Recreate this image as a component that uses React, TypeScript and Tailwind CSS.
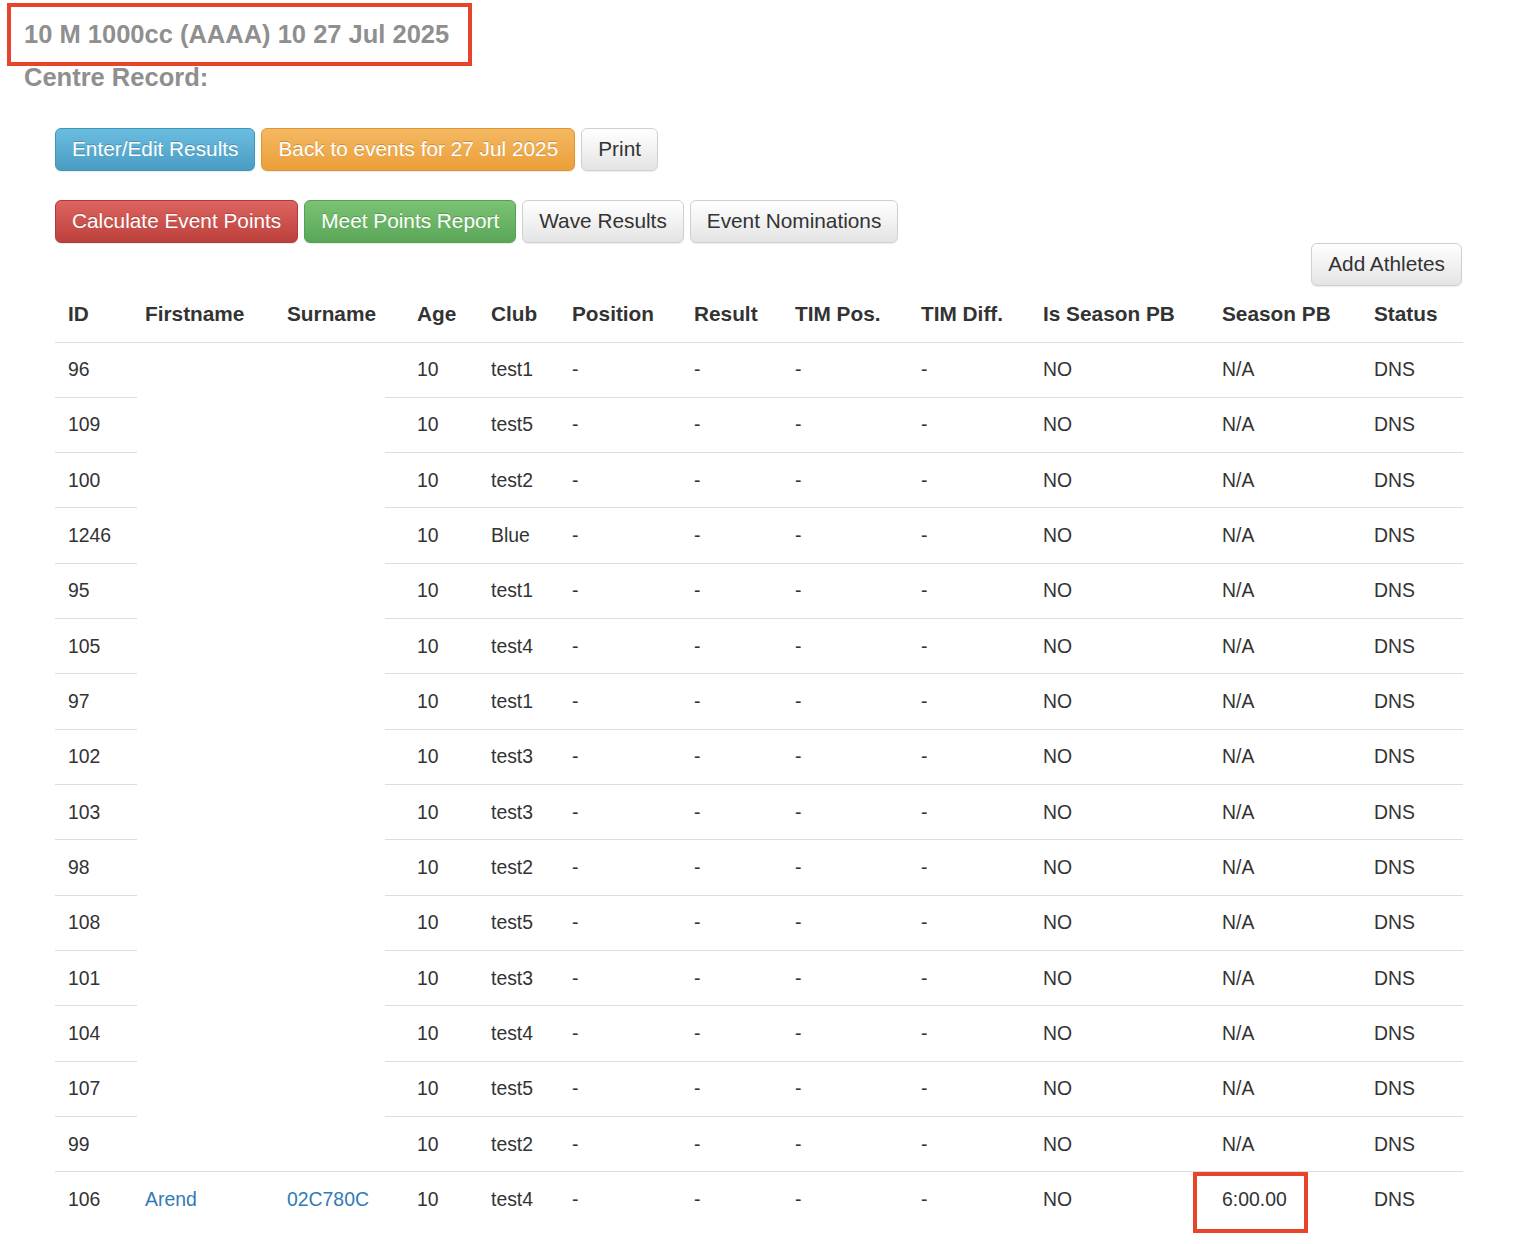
import React from 'react';

type Entrant = {
  id: string;
  firstname?: string;
  surname?: string;
  age: string;
  club: string;
  seasonPb: string;
};

const entrants: Entrant[] = [
  { id: '96', age: '10', club: 'test1', seasonPb: 'N/A' },
  { id: '109', age: '10', club: 'test5', seasonPb: 'N/A' },
  { id: '100', age: '10', club: 'test2', seasonPb: 'N/A' },
  { id: '1246', age: '10', club: 'Blue', seasonPb: 'N/A' },
  { id: '95', age: '10', club: 'test1', seasonPb: 'N/A' },
  { id: '105', age: '10', club: 'test4', seasonPb: 'N/A' },
  { id: '97', age: '10', club: 'test1', seasonPb: 'N/A' },
  { id: '102', age: '10', club: 'test3', seasonPb: 'N/A' },
  { id: '103', age: '10', club: 'test3', seasonPb: 'N/A' },
  { id: '98', age: '10', club: 'test2', seasonPb: 'N/A' },
  { id: '108', age: '10', club: 'test5', seasonPb: 'N/A' },
  { id: '101', age: '10', club: 'test3', seasonPb: 'N/A' },
  { id: '104', age: '10', club: 'test4', seasonPb: 'N/A' },
  { id: '107', age: '10', club: 'test5', seasonPb: 'N/A' },
  { id: '99', age: '10', club: 'test2', seasonPb: 'N/A' },
  { id: '106', firstname: 'Arend', surname: '02C780C', age: '10', club: 'test4', seasonPb: '6:00.00' },
];

const variants = {
  info: 'text-white border-[#3f94bb] from-[#6bbde0] to-[#4a9cc3] [text-shadow:0_-1px_0_rgba(0,0,0,0.2)]',
  warning: 'text-white border-[#e0952f] from-[#f4b862] to-[#eb9f37] [text-shadow:0_-1px_0_rgba(0,0,0,0.2)]',
  danger: 'text-white border-[#b23a35] from-[#dd6460] to-[#bc403b] [text-shadow:0_-1px_0_rgba(0,0,0,0.2)]',
  success: 'text-white border-[#55a152] from-[#7cc374] to-[#5aa658] [text-shadow:0_-1px_0_rgba(0,0,0,0.2)]',
  default: 'text-[#333] border-[#d0d0d0] from-[#ffffff] to-[#e4e4e4]',
};

function Btn({ variant, children }: { variant: keyof typeof variants; children: React.ReactNode }) {
  return (
    <button
      type="button"
      className={`inline-flex items-center h-[43px] px-[16px] rounded-[6px] border bg-linear-to-b text-[20.8px] leading-none whitespace-nowrap shadow-[0_1px_1px_rgba(0,0,0,0.08)] ${variants[variant]}`}
    >
      {children}
    </button>
  );
}

const columns = [
  { label: 'ID', width: 'w-[82px]', pad: 'pl-[13px]' },
  { label: 'Firstname', width: 'w-[139px]', pad: 'pl-[8px]' },
  { label: 'Surname', width: 'w-[109px]', pad: 'pl-[11px]' },
  { label: 'Age', width: 'w-[95px]', pad: 'pl-[32px]' },
  { label: 'Club', width: 'w-[81px]', pad: 'pl-[11px]' },
  { label: 'Position', width: 'w-[122px]', pad: 'pl-[11px]' },
  { label: 'Result', width: 'w-[101px]', pad: 'pl-[11px]' },
  { label: 'TIM Pos.', width: 'w-[126px]', pad: 'pl-[11px]' },
  { label: 'TIM Diff.', width: 'w-[122px]', pad: 'pl-[11px]' },
  { label: 'Is Season PB', width: 'w-[179px]', pad: 'pl-[11px]' },
  { label: 'Season PB', width: 'w-[152px]', pad: 'pl-[11px]' },
  { label: 'Status', width: 'w-[100px]', pad: 'pl-[11px]' },
];

export default function App() {
  const lastIdx = entrants.length - 1;

  return (
    <div className="min-h-[1244px] bg-white font-['Liberation_Sans',Arial,sans-serif] text-[#333]">
      {/* Event heading */}
      <div className="pl-[7px] pt-[3px]">
        <h2 className="inline-flex items-center h-[63px] w-[465px] border-4 border-[#e8432b] pl-[13px] text-[25.5px] font-bold text-[#8f8f8f]">
          10 M 1000cc (AAAA) 10 27 Jul 2025
        </h2>
      </div>
      <h3 className="pl-[24px] -mt-[1px] text-[25.5px] leading-[24px] font-bold text-[#8f8f8f]">Centre Record:</h3>

      <div className="ml-[55px] w-[1408px]">
        {/* Actions */}
        <div className="flex gap-[6px] mt-[39px]">
          <Btn variant="info">Enter/Edit Results</Btn>
          <Btn variant="warning">Back to events for 27 Jul 2025</Btn>
          <Btn variant="default">Print</Btn>
        </div>
        <div className="flex gap-[6px] mt-[29px]">
          <Btn variant="danger">Calculate Event Points</Btn>
          <Btn variant="success">Meet Points Report</Btn>
          <Btn variant="default">Wave Results</Btn>
          <Btn variant="default">Event Nominations</Btn>
        </div>
        <div className="flex justify-end pr-[1px]">
          <Btn variant="default">Add Athletes</Btn>
        </div>

        {/* Entrants */}
        <table className="table-fixed border-collapse w-[1408px] text-left">
          <colgroup>
            {columns.map((c) => (
              <col key={c.label} className={c.width} />
            ))}
          </colgroup>
          <thead>
            <tr className="h-[56px]">
              {columns.map((c) => (
                <th
                  key={c.label}
                  className={`${c.pad} align-middle text-[20.8px] font-bold whitespace-nowrap border-b border-[#dddddd]`}
                >
                  {c.label}
                </th>
              ))}
            </tr>
          </thead>
          <tbody className="text-[19.4px]">
            {entrants.map((e, i) => {
              const hideNameRule = i > 0 && i < lastIdx;
              const rule = 'border-t border-[#dddddd]';
              const nameRule = hideNameRule ? '' : rule;
              return (
                <tr key={e.id} className="h-[55.33px]">
                  <td className={`pl-[13px] ${rule}`}>{e.id}</td>
                  <td className={`pl-[8px] ${nameRule}`}>
                    {e.firstname && <a className="text-[#337ab7]">{e.firstname}</a>}
                  </td>
                  <td className={`pl-[11px] ${nameRule}`}>
                    {e.surname && <a className="text-[#337ab7]">{e.surname}</a>}
                  </td>
                  <td className={`pl-[32px] ${rule}`}>{e.age}</td>
                  <td className={`pl-[11px] ${rule}`}>{e.club}</td>
                  <td className={`pl-[11px] ${rule}`}>-</td>
                  <td className={`pl-[11px] ${rule}`}>-</td>
                  <td className={`pl-[11px] ${rule}`}>-</td>
                  <td className={`pl-[11px] ${rule}`}>-</td>
                  <td className={`pl-[11px] ${rule}`}>NO</td>
                  <td className={`pl-[11px] ${rule} relative`}>
                    {e.seasonPb}
                    {i === lastIdx && (
                      <span className="absolute left-[-18px] top-0 w-[115px] h-[61px] border-4 border-[#e8432b]" />
                    )}
                  </td>
                  <td className={`pl-[11px] ${rule}`}>DNS</td>
                </tr>
              );
            })}
          </tbody>
        </table>
      </div>
    </div>
  );
}
